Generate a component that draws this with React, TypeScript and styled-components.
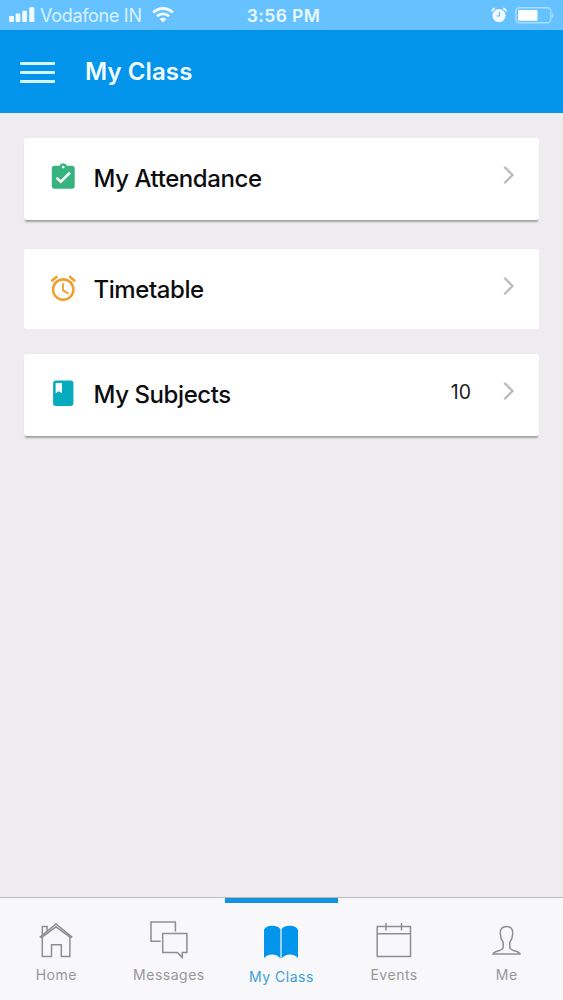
import React from "react";
import styled, { createGlobalStyle } from "styled-components";

const GlobalStyle = createGlobalStyle`
  * { box-sizing: border-box; }
  body { margin: 0; background: #eeecef; }
`;

const Screen = styled.div`
  display: flex;
  flex-direction: column;
  width: 563px;
  height: 1000px;
  overflow: hidden;
  background: #eeecef;
  font-family: Inter, "Liberation Sans", sans-serif;
  color: #0d0d0f;
`;

const StatusBar = styled.div`
  display: grid;
  grid-template-columns: 1fr auto 1fr;
  align-items: center;
  height: 30px;
  flex: none;
  padding: 0 9px;
  background: #66c2ff;
  color: #e9f8ff;
`;

const StatusGroup = styled.div<{ $end?: boolean }>`
  display: flex;
  align-items: center;
  justify-content: ${(p) => (p.$end ? "flex-end" : "flex-start")};
`;

const Carrier = styled.span`
  margin: 2px 10px 0 5px;
  font-size: 18px;
  letter-spacing: -0.3px;
  line-height: 22px;
  white-space: nowrap;
  color: #d8f2ff;
`;

const Clock = styled.span`
  padding: 1px 0 0 4px;
  font-size: 17.5px;
  font-weight: 600;
  letter-spacing: 0.4px;
  line-height: 22px;
`;

const AlarmIcon = styled.svg`
  width: 18px;
  height: 16px;
`;

const BatteryIcon = styled.svg`
  width: 39px;
  height: 18px;
  margin-left: 7px;
`;

const Header = styled.header`
  display: flex;
  align-items: center;
  flex: none;
  height: 83px;
  padding-left: 20px;
  background: #0394eb;
  color: #f3fcff;
`;

const MenuButton = styled.button`
  display: flex;
  flex-direction: column;
  gap: 6px;
  width: 35px;
  margin: 2px 30px 0 0;
  padding: 0;
  border: 0;
  background: none;
`;

const MenuLine = styled.span`
  height: 3px;
  border-radius: 1px;
  background: #d5f5ff;
`;

const Title = styled.h1`
  margin: 0;
  font-size: 24px;
  font-weight: 600;
  letter-spacing: 0.1px;
  line-height: 30px;
`;

const Content = styled.main`
  flex: 1;
  padding: 25px 24px 0;
`;

const Card = styled.section<{ $height: number; $gap: number; $raised?: boolean }>`
  display: flex;
  align-items: flex-start;
  height: ${(p) => p.$height}px;
  margin-bottom: ${(p) => p.$gap}px;
  padding: 24px 24px 0;
  border-radius: 3px;
  background: #fff;
  box-shadow: ${(p) => (p.$raised ? "0 3px 2px -1.5px #a3a1a4" : "none")};
`;

const CardIcon = styled.svg`
  flex: none;
  width: 30.5px;
  height: 30.5px;
`;

const CardLabel = styled.span`
  flex: 1;
  margin: 2px 0 0 15px;
  font-size: 24px;
  font-weight: 500;
  letter-spacing: -0.42px;
  line-height: 30px;
`;

const Count = styled.span`
  margin: 1px 32px 0 0;
  font-size: 19.5px;
  line-height: 26px;
  color: #1c1c1e;
`;

const Chevron = styled.svg`
  flex: none;
  width: 12px;
  height: 20px;
  margin-top: 3px;
`;

const TabBar = styled.nav`
  display: grid;
  grid-template-columns: repeat(5, 1fr);
  flex: none;
  height: 103px;
  border-top: 1px solid #bcbabc;
  background: #f8f7fa;
`;

const Tab = styled.a<{ $active?: boolean }>`
  display: flex;
  flex-direction: column;
  align-items: center;
  border-top: 5px solid ${(p) => (p.$active ? "#1492e0" : "transparent")};
  padding-top: ${(p) => (p.$active ? 17 : 15)}px;
  margin-top: -0.5px;
  color: ${(p) => (p.$active ? "#3c9fda" : "#98979a")};
`;

const TabIcon = styled.svg`
  width: 44px;
  height: 44px;
  fill: none;
  stroke: #8f8e91;
  stroke-width: 1.5;
`;

const TabLabel = styled.span`
  margin-top: 4px;
  font-size: 14px;
  letter-spacing: 0.5px;
  line-height: 18px;
`;

const ArrowRight = () => (
  <Chevron viewBox="0 0 12 20" fill="none" stroke="#bdbdbd" strokeWidth="2.3">
    <path d="M1.3 1.8 9.5 10l-8.2 8.2" />
  </Chevron>
);

export default function App() {
  return (
    <Screen>
      <GlobalStyle />
      <StatusBar>
        <StatusGroup>
          <svg width="26" height="16" viewBox="0 0 26 16" fill="#f2fbff">
            <rect x="0" y="9" width="5" height="6" rx="1" />
            <rect x="6.7" y="6.5" width="4.6" height="8.5" rx="1" />
            <rect x="13.3" y="3.8" width="4.6" height="11.2" rx="1" />
            <rect x="20.3" y="0.3" width="5" height="14.7" rx="1" />
          </svg>
          <Carrier>Vodafone IN</Carrier>
          <svg width="22" height="16" viewBox="0 0 22 16" fill="none" stroke="#f2fbff" strokeWidth="2.8">
            <path d="M1.2 5.6C6.8.1 15.2.1 20.8 5.6" />
            <path d="M5 9.2c3.5-3.2 8.5-3.2 12 0" />
            <path d="m11 15.6-3.4-3.5c2-1.8 4.8-1.8 6.8 0Z" fill="#f2fbff" stroke="none" />
          </svg>
        </StatusGroup>
        <Clock>3:56 PM</Clock>
        <StatusGroup $end>
          <AlarmIcon viewBox="0 0 18 16" fill="none">
            <circle cx="9" cy="8.6" r="6.6" fill="#f2fbff" />
            <path d="M1.9 3.6 4.2 1.5M16.1 3.6l-2.3-2.1" stroke="#f2fbff" strokeWidth="1.7" strokeLinecap="round" />
            <path d="M9.4 4.8v4.2H6.5" stroke="#66c2ff" strokeWidth="1.2" />
          </AlarmIcon>
          <BatteryIcon viewBox="0 0 39 18" fill="none">
            <rect x="0.8" y="1.8" width="35" height="15" rx="3.5" stroke="#a9deff" strokeWidth="1.4" />
            <rect x="3" y="4" width="19.5" height="10.8" rx="1" fill="#fff" />
            <path d="M37.2 6.5c1.6.8 1.6 4.8 0 5.6Z" fill="#a9deff" />
          </BatteryIcon>
        </StatusGroup>
      </StatusBar>

      <Header>
        <MenuButton aria-label="Menu">
          <MenuLine />
          <MenuLine />
          <MenuLine />
        </MenuButton>
        <Title>My Class</Title>
      </Header>

      <Content>
        <Card $height={82} $gap={29} $raised>
          <CardIcon viewBox="0 0 24 24" fill="#36b37e">
            <path d="M19 3h-4.18C14.4 1.84 13.3 1 12 1c-1.3 0-2.4.84-2.82 2H5c-1.1 0-2 .9-2 2v14c0 1.1.9 2 2 2h14c1.1 0 2-.9 2-2V5c0-1.1-.9-2-2-2zm-7 0c.55 0 1 .45 1 1s-.45 1-1 1-1-.45-1-1 .45-1 1-1zm-2 14l-4-4 1.41-1.41L10 14.17l6.59-6.59L18 9l-8 8z" />
          </CardIcon>
          <CardLabel>My Attendance</CardLabel>
          <ArrowRight />
        </Card>
        <Card $height={80} $gap={25}>
          <CardIcon viewBox="0 0 24 24" fill="#f0a02c">
            <path d="M22 5.72l-4.6-3.86-1.29 1.53 4.6 3.86L22 5.72zM7.88 3.39L6.6 1.86 2 5.71l1.29 1.53 4.59-3.85zM12.5 8H11v6l4.75 2.85.75-1.23-4-2.37V8zM12 4c-4.97 0-9 4.03-9 9s4.02 9 9 9c4.97 0 9-4.03 9-9s-4.03-9-9-9zm0 16c-3.87 0-7-3.13-7-7s3.13-7 7-7 7 3.13 7 7-3.13 7-7 7z" />
          </CardIcon>
          <CardLabel>Timetable</CardLabel>
          <ArrowRight />
        </Card>
        <Card $height={82} $gap={0} $raised>
          <CardIcon viewBox="0 0 24 24" fill="#06acbd">
            <path d="M18 2H6c-1.1 0-2 .9-2 2v16c0 1.1.9 2 2 2h12c1.1 0 2-.9 2-2V4c0-1.1-.9-2-2-2zM6 4h5v8l-2.5-1.5L6 12V4z" />
          </CardIcon>
          <CardLabel>My Subjects</CardLabel>
          <Count>10</Count>
          <ArrowRight />
        </Card>
      </Content>

      <TabBar>
        <Tab>
          <TabIcon viewBox="0 0 44 44">
            <path d="M5.700 19.300 22 6l16.300 13.300M8.300 18.800v19.800h9.200V26.800h9.800v11.800h8.600V18.800M7 20 22 8.800 37 20M8.300 16.800V8.500h4.800v4.300" />
          </TabIcon>
          <TabLabel>Home</TabLabel>
        </Tab>
        <Tab>
          <TabIcon viewBox="0 0 44 44">
            <path d="M13.7 23.2H4V4h24.4v9.5M15.7 15.6h24.2v18.8h-4.6v5l-5-5H15.7Z" />
          </TabIcon>
          <TabLabel>Messages</TabLabel>
        </Tab>
        <Tab $active>
          <TabIcon viewBox="0 0 44 44">
            <path d="M5 10c1.5-5.2 13-5.8 16.4-1v29.5C17.5 33.4 9.500 33.4 5 38ZM22.6 9c3.400-4.800 14.900-4.200 16.400 1v28c-4.500-4.600-12.500-4.600-16.400.5Z" fill="#0394eb" stroke="none" />
          </TabIcon>
          <TabLabel>My Class</TabLabel>
        </Tab>
        <Tab>
          <TabIcon viewBox="0 0 44 44">
            <path d="M5.2 8.5h33.3v30H5.2ZM5.2 15.8h33.3M14 5v7.5M29.5 5v7.5" />
          </TabIcon>
          <TabLabel>Events</TabLabel>
        </Tab>
        <Tab>
          <TabIcon viewBox="0 0 44 44">
            <path d="M21.500 8.500c-4.200 0-6.500 2.500-6.200 7.200.2 4.300 1.500 6.800 2.900 8.800v4.500c0 2.500-2 3-4.700 3.800-3.500 1-5.300 1.400-5.500 3.200h27c-.2-1.800-2-2.200-5.500-3.200-2.700-.8-4.700-1.300-4.700-3.800v-4.500c1.400-2 2.700-4.500 2.900-8.800.3-4.700-2-7.200-6.200-7.200Z" />
          </TabIcon>
          <TabLabel>Me</TabLabel>
        </Tab>
      </TabBar>
    </Screen>
  );
}
